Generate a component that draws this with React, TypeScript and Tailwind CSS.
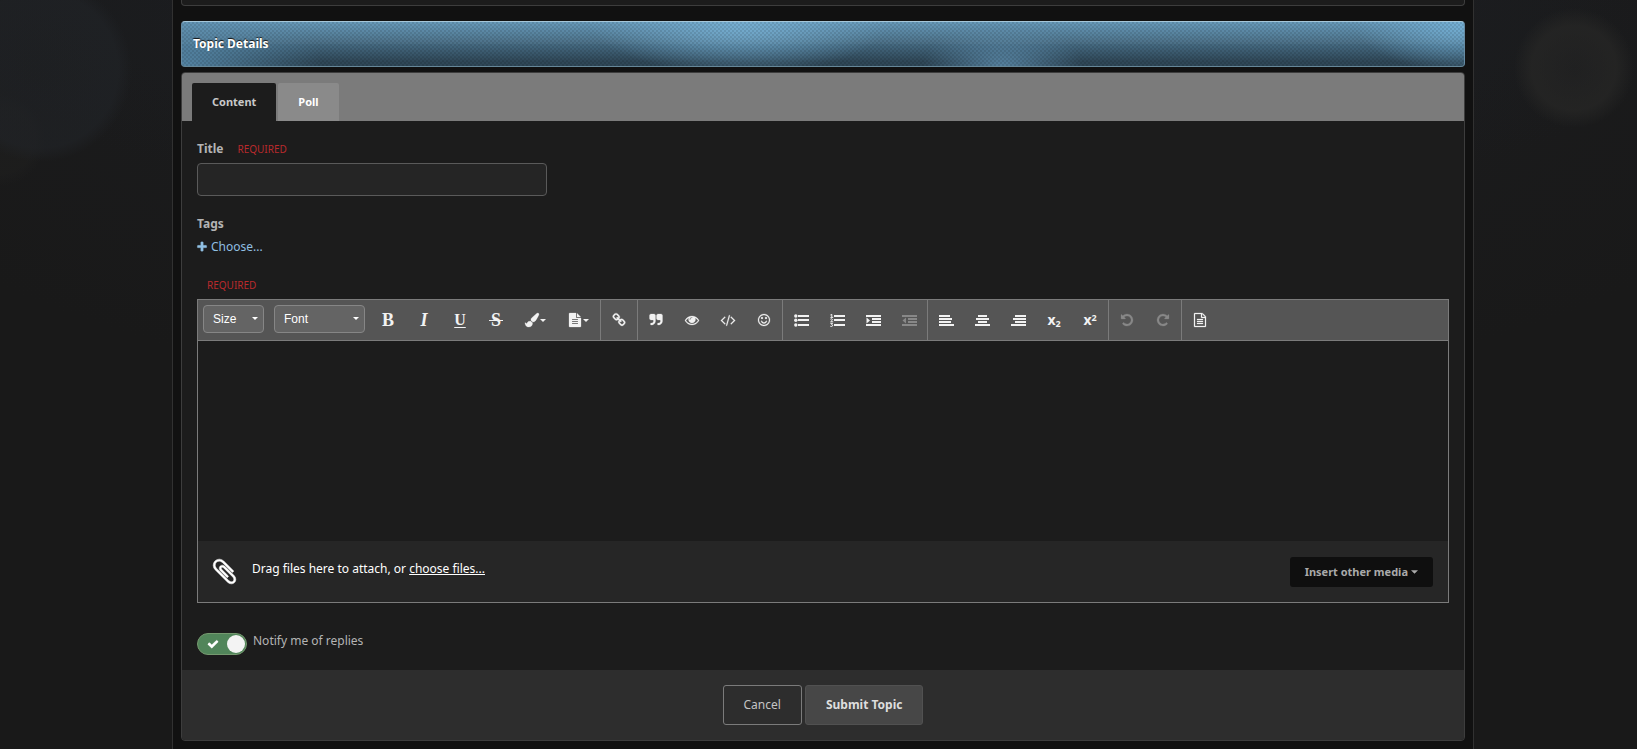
import React, { ReactNode, useState } from "react";

const paths = {
  link: "M1520 1216q0-40-28-68l-208-208q-28-28-68-28-42 0-72 32 3 3 19 18.5t21.5 21.5 15 19 13 25.5 3.5 27.5q0 40-28 68t-68 28q-15 0-27.5-3.5t-25.5-13-19-15-21.5-21.5-18.5-19q-33 31-33 73 0 40 28 68l206 207q27 27 68 27 40 0 68-26l147-146q28-28 28-67zm-703-705q0-40-28-68l-206-207q-28-28-68-28-39 0-68 27l-147 146q-28 28-28 67 0 40 28 68l208 208q27 27 68 27 42 0 72-31-3-3-19-18.5t-21.5-21.5-15-19-13-25.5-3.5-27.5q0-40 28-68t68-28q15 0 27.5 3.5t25.5 13 19 15 21.5 21.5 18.5 19q33-31 33-73zm895 705q0 120-85 203l-147 146q-83 83-203 83-121 0-204-85l-206-207q-83-83-83-203 0-123 88-209l-88-88q-86 88-208 88-120 0-204-84l-208-208q-84-84-84-204t85-203l147-146q83-83 203-83 121 0 204 85l206 207q83 83 83 203 0 123-88 209l88 88q86-88 208-88 120 0 204 84l208 208q84 84 84 204z",
  plus: "M1600 736v192q0 40-28 68t-68 28h-416v416q0 40-28 68t-68 28h-192q-40 0-68-28t-28-68v-416h-416q-40 0-68-28t-28-68v-192q0-40 28-68t68-28h416v-416q0-40 28-68t68-28h192q40 0 68 28t28 68v416h416q40 0 68 28t28 68z",
  check: "M1671 566q0 40-28 68l-724 724-136 136q-28 28-68 28t-68-28l-136-136-362-362q-28-28-28-68t28-68l136-136q28-28 68-28t68 28l294 295 656-657q28-28 68-28t68 28l136 136q28 28 28 68z",
  eye: "M1664 960q-152-236-381-353 61 104 61 225 0 185-131.5 316.5t-316.5 131.5-316.5-131.5-131.5-316.5q0-121 61-225-229 117-381 353 133 205 333.5 326.5t434.5 121.5 434.5-121.5 333.5-326.5zm-720-384q0-20-14-34t-34-14q-125 0-214.5 89.5t-89.5 214.5q0 20 14 34t34 14 34-14 14-34q0-86 61-147t147-61q20 0 34-14t14-34zm848 384q0 34-20 69-140 230-376.5 368.5t-499.5 138.5-499.5-139-376.5-368q-20-35-20-69t20-69q140-229 376.5-368t499.5-139 499.5 139 376.5 368q20 35 20 69z",
  code: "M553 1399l-50 50q-10 10-23 10t-23-10l-466-466q-10-10-10-23t10-23l466-466q10-10 23-10t23 10l50 50q10 10 10 23t-10 23l-393 393 393 393q10 10 10 23t-10 23zm591-1067l-373 1291q-4 13-15.5 19.5t-23.5 2.5l-62-17q-13-4-19.5-15.5t-2.5-24.5l373-1291q4-13 15.5-19.5t23.5-2.5l62 17q13 4 19.5 15.5t2.5 24.5zm657 651l-466 466q-10 10-23 10t-23-10l-50-50q-10-10-10-23t10-23l393-393-393-393q-10-10-10-23t10-23l50-50q10-10 23-10t23 10l466 466q10 10 10 23t-10 23z",
  smile: "M1262 1075q-37 121-138 195t-228 74-228-74-138-195q-8-25 4-48.5t38-31.5q25-8 48.5 4t31.5 38q25 80 92.5 129.5t151.5 49.5 151.5-49.5 92.5-129.5q8-26 32-38t49-4 37 31.5 4 48.5zm-494-435q0 53-37.5 90.5t-90.5 37.5-90.5-37.5-37.5-90.5 37.5-90.5 90.5-37.5 90.5 37.5 37.5 90.5zm512 0q0 53-37.5 90.5t-90.5 37.5-90.5-37.5-37.5-90.5 37.5-90.5 90.5-37.5 90.5 37.5 37.5 90.5zm256 256q0-130-51-248.5t-136.5-204-204-136.5-248.5-51-248.5 51-204 136.5-136.5 204-51 248.5 51 248.5 136.5 204 204 136.5 248.5 51 248.5-51 204-136.5 136.5-204 51-248.5zm128 0q0 209-103 385.5t-279.5 279.5-385.5 103-385.5-103-279.5-279.5-103-385.5 103-385.5 279.5-279.5 385.5-103 385.5 103 279.5 279.5 103 385.5z",
  quote: "M832 320v704q0 104-40.5 198.5t-109.5 163.5-163.5 109.5-198.5 40.5h-64q-26 0-45-19t-19-45v-128q0-26 19-45t45-19h64q106 0 181-75t75-181v-32q0-40-28-68t-68-28h-224q-80 0-136-56t-56-136v-384q0-80 56-136t136-56h384q80 0 136 56t56 136zm896 0v704q0 104-40.5 198.5t-109.5 163.5-163.5 109.5-198.5 40.5h-64q-26 0-45-19t-19-45v-128q0-26 19-45t45-19h64q106 0 181-75t75-181v-32q0-40-28-68t-68-28h-224q-80 0-136-56t-56-136v-384q0-80 56-136t136-56h384q80 0 136 56t56 136z",
  undo: "M1664 896q0 156-61 298t-164 245-245 164-298 61q-172 0-327-72.5t-264-204.5q-7-10-6.5-22.5t8.5-20.5l137-138q10-9 25-9 16 2 23 12 73 95 179 147t225 52q104 0 198.5-40.5t163.5-109.5 109.5-163.5 40.5-198.5-40.5-198.5-109.5-163.5-163.5-109.5-198.5-40.5q-98 0-188 35.5t-160 101.5l137 138q31 30 14 69-17 40-59 40h-448q-26 0-45-19t-19-45v-448q0-42 40-59 39-17 69 14l130 129q107-101 244.5-156.5t284.5-55.5q156 0 298 61t245 164 164 245 61 298z",
  clip: "M1596 1385q0 117-79 196t-196 79q-135 0-235-100l-777-776q-113-115-113-271 0-159 110-270t269-111q158 0 273 113l605 606q10 10 10 22 0 16-30.5 46.5t-46.5 30.5q-13 0-23-10l-606-607q-79-77-181-77-106 0-179 75t-73 181q0 105 76 181l776 777q63 63 145 63 64 0 106-42t42-106q0-82-63-145l-581-581q-26-24-60-24-29 0-48 19t-19 48q0 32 25 59l410 410q10 10 10 22 0 16-31 47t-47 31q-12 0-22-10l-410-410q-63-61-63-149 0-82 57-139t139-57q88 0 149 63l581 581q100 98 100 235z",
  page: "M1596 380q28 28 48 76t20 88v1152q0 40-28 68t-68 28h-1344q-40 0-68-28t-28-68v-1600q0-40 28-68t68-28h896q40 0 88 20t76 48zm-444-244v376h376q-10-29-22-41l-313-313q-12-12-41-22zm384 1528v-1024h-416q-40 0-68-28t-28-68v-416h-768v1536h1280zm-1024-864q0-14 9-23t23-9h704q14 0 23 9t9 23v64q0 14-9 23t-23 9h-704q-14 0-23-9t-9-23v-64zm736 224q14 0 23 9t9 23v64q0 14-9 23t-23 9h-704q-14 0-23-9t-9-23v-64q0-14 9-23t23-9h704zm0 256q14 0 23 9t9 23v64q0 14-9 23t-23 9h-704q-14 0-23-9t-9-23v-64q0-14 9-23t23-9h704z",
  pageSolid: "M1596 476q14 14 28 36h-472v-472q22 14 36 28zm-476 164h544v1056q0 40-28 68t-68 28h-1344q-40 0-68-28t-28-68v-1600q0-40 28-68t68-28h800v544q0 40 28 68t68 28zm160 736v-64q0-14-9-23t-23-9h-704q-14 0-23 9t-9 23v64q0 14 9 23t23 9h704q14 0 23-9t9-23zm0-256v-64q0-14-9-23t-23-9h-704q-14 0-23 9t-9 23v64q0 14 9 23t23 9h704q14 0 23-9t9-23zm0-256v-64q0-14-9-23t-23-9h-704q-14 0-23 9t-9 23v64q0 14 9 23t23 9h704q14 0 23-9t9-23z",
  brush: "M1615 0q70 0 122.5 46.5t52.5 116.5q0 63-45 151-332 629-465 752-97 91-218 91-126 0-216.5-92.5t-90.5-219.5q0-128 92-212l638-579q59-54 130-54zm-909 1034q39 76 106.5 130t150.5 76l1 71q4 213-129.5 347t-348.5 134q-123 0-218-46.5t-152.5-127.5-86.5-183-29-220q7 5 41 30t62 44.5 59 36.5 46 17q41 0 55-37 25-66 57.5-112.5t69.5-76 88-47.5 103-25.5 125-10.5z",
};

function Glyph({ name, className = "size-[14px]" }: { name: keyof typeof paths; className?: string }) {
  return (
    <svg viewBox="0 0 1792 1792" className={`overflow-visible ${className}`} fill="currentColor" stroke="currentColor" strokeWidth="30" aria-hidden="true">
      <path d={paths[name]} />
    </svg>
  );
}

/* Icons made of horizontal bars, on a 15 by 13 grid. */
function Bars({ d, children }: { d: string; children?: ReactNode }) {
  return (
    <svg viewBox="0 0 15 13" className="h-[13px] w-[15px]" fill="currentColor" aria-hidden="true">
      <path d={d} />
      {children}
    </svg>
  );
}

function Caret({ className = "h-1 w-[7px]" }: { className?: string }) {
  return (
    <svg viewBox="0 0 8 4" className={className} fill="currentColor" aria-hidden="true">
      <path d="M0 0h8L4 4z" />
    </svg>
  );
}

function Tool({ label, children, disabled, wide }: { label: string; children: ReactNode; disabled?: boolean; wide?: boolean }) {
  return (
    <button
      type="button"
      aria-label={label}
      title={label}
      disabled={disabled}
      className={`flex h-10 items-center justify-center text-[#f2f2f2] disabled:text-[#888] ${wide ? "w-[43px] gap-px" : "w-9"}`}
    >
      {children}
    </button>
  );
}

function Group({ children }: { children: ReactNode }) {
  return <div className="flex border-r border-[#7b7b7b]">{children}</div>;
}

function Picker({ label, className }: { label: string; className: string }) {
  return (
    <div className={`relative h-7 ${className}`}>
      <select
        aria-label={label}
        className="block size-full appearance-none rounded-sm border border-[#868686] bg-[#646464] pl-[9px] font-['Liberation_Sans',sans-serif] text-xs text-white"
      >
        <option>{label}</option>
      </select>
      <span className="pointer-events-none absolute top-3 right-[6px] flex text-white">
        <Caret className="h-[3px] w-[6px]" />
      </span>
    </div>
  );
}

function Required() {
  return <span className="text-[10px] leading-4 text-[#b92a2c] uppercase">Required</span>;
}

function Toolbar() {
  return (
    <div role="toolbar" aria-label="Formatting" className="flex flex-wrap border-b border-[#7b7b7b] bg-[#555]">
      <div className="flex items-center gap-[10px] pr-[5px] pb-[2px] pl-[5px]">
        <Picker label="Size" className="w-[61px]" />
        <Picker label="Font" className="w-[91px]" />
      </div>
      <Group>
        <Tool label="Bold"><b className="font-['Liberation_Serif',serif] text-lg">B</b></Tool>
        <Tool label="Italic"><b className="font-['Liberation_Serif',serif] text-lg italic">I</b></Tool>
        <Tool label="Underline"><b className="font-['Liberation_Serif',serif] text-base underline decoration-1 underline-offset-2">U</b></Tool>
        <Tool label="Strike Through">
          <span className="relative font-['Liberation_Serif',serif] text-lg leading-6 font-bold">
            S
            <span className="absolute top-3 -right-[2px] -left-[2px] h-px bg-current" />
          </span>
        </Tool>
        <Tool label="Text Color" wide><Glyph name="brush" /><Caret className="h-[3px] w-[6px]" /></Tool>
        <Tool label="Background Color" wide><Glyph name="pageSolid" /><Caret className="h-[3px] w-[6px]" /></Tool>
      </Group>
      <Group>
        <Tool label="Link"><Glyph name="link" /></Tool>
      </Group>
      <Group>
        <Tool label="Quote"><Glyph name="quote" /></Tool>
        <Tool label="Spoiler"><Glyph name="eye" /></Tool>
        <Tool label="Code"><Glyph name="code" /></Tool>
        <Tool label="Emoticons"><Glyph name="smile" /></Tool>
      </Group>
      <Group>
        <Tool label="Bulleted List">
          <Bars d="M4 1h11v2H4zM4 5h11v2H4zM4 10h11v2H4z">
            <circle cx="1.8" cy="2" r="1.7" /><circle cx="1.8" cy="6.3" r="1.7" /><circle cx="1.8" cy="11" r="1.7" />
          </Bars>
        </Tool>
        <Tool label="Numbered List">
          <Bars d="M4 1h11v2H4zM4 5h11v2H4zM4 10h11v2H4z">
            <path d="M.4 1 1.8.3V3.2M.4 3.4h2.8M.4 5.2q2-1 2.2.3 0 .7-2 2.3h2.6M.4 9.4h2.2L1.6 10.7q1.3.1 1.1 1.1-.6 1.1-2.4.5" fill="none" stroke="currentColor" />
          </Bars>
        </Tool>
        <Tool label="Increase Indent">
          <Bars d="M0 1h15v2H0zM6 4h9v2H6zM6 7h9v2H6zM0 10h15v2H0zM.5 3.6v5.8L4 6.5z" />
        </Tool>
        <Tool label="Decrease Indent" disabled>
          <Bars d="M0 1h15v2H0zM6 4h9v2H6zM6 7h9v2H6zM0 10h15v2H0zM4 3.6v5.8L.5 6.5z" />
        </Tool>
      </Group>
      <Group>
        <Tool label="Align Left"><Bars d="M0 1h11v2H0zM0 4h13v2H0zM0 7h12v2H0zM0 10h15v2H0z" /></Tool>
        <Tool label="Center"><Bars d="M3 1h9v2H3zM1 4h13v2H1zM3 7h9v2H3zM0 10h15v2H0z" /></Tool>
        <Tool label="Align Right"><Bars d="M4 1h11v2H4zM2 4h13v2H2zM4 7h11v2H4zM0 10h15v2H0z" /></Tool>
        <Tool label="Subscript"><b className="text-sm">x<sub className="text-[9px]">2</sub></b></Tool>
        <Tool label="Superscript"><b className="text-sm">x<sup className="text-[9px]">2</sup></b></Tool>
      </Group>
      <Group>
        <Tool label="Undo" disabled><Glyph name="undo" /></Tool>
        <Tool label="Redo" disabled><Glyph name="undo" className="size-[14px] -scale-x-100" /></Tool>
      </Group>
      <Tool label="Preview"><Glyph name="page" /></Tool>
    </div>
  );
}

export default function App() {
  const [notify, setNotify] = useState(true);
  return (
    <div className="min-h-screen bg-[#191919] bg-[radial-gradient(circle_at_40px_70px,rgba(33,36,40,0.5)_0,rgba(33,36,40,0.6)_78px,transparent_92px),radial-gradient(circle_at_1574px_68px,rgba(38,38,38,0.5)_0,rgba(38,38,37,0.8)_42px,transparent_60px),radial-gradient(circle_at_0px_140px,rgba(33,33,32,0.4)_34px,transparent_46px),radial-gradient(ellipse_900px_240px_at_50%_0,#1c1f25,transparent),radial-gradient(ellipse_1100px_430px_at_50%_0,#1d1e21,transparent)] pr-[163px] pl-[172px] font-['Noto_Sans',sans-serif] text-xs leading-5 text-[#b4b4b4]">
      <main className="min-h-screen border-x border-[#313131] bg-[#111] px-2 pb-2">
        <div className="h-[6px] rounded-b-sm border border-t-0 border-[#3d3d3d] bg-[#1c1c1c]" />

        <h2 className="mt-[15px] flex h-[46px] items-center rounded-sm border border-t-[#a5c6d8] border-r-[#668ba3] border-b-[#668798] border-l-[#668ba3] bg-[#36536a] bg-[image:repeating-conic-gradient(rgba(0,0,0,0.10)_0_25%,transparent_0_50%),linear-gradient(rgba(255,255,255,0.03)_50%,transparent_50%),radial-gradient(ellipse_150px_52px_at_43.5%_0,#72acd0,transparent),radial-gradient(ellipse_80px_46px_at_64%_100%,rgba(92,139,171,0.85),transparent),radial-gradient(ellipse_140px_80px_at_0_100%,rgba(88,139,172,0.9),transparent),radial-gradient(ellipse_110px_50px_at_100%_0,#70add3,transparent),linear-gradient(#6297b8,#2f4757_90%)] bg-size-[4px_4px,auto,auto,auto,auto,auto,auto] px-[11px] text-xs font-bold text-white [text-shadow:0_-1px_1px_#111]">
          Topic Details
        </h2>

        <form className="mt-[5px] overflow-hidden rounded-sm border border-[#3d3d3d] bg-[#1c1c1c]" onSubmit={(e) => e.preventDefault()}>
          <div role="tablist" className="flex gap-[2px] bg-[#7b7b7b] px-[10px] pt-[10px] text-[11px] font-bold">
            <button type="button" role="tab" aria-selected="true" className="h-[38px] rounded-t-xs bg-[#1c1c1c] px-5 text-[#c9c9c9]">Content</button>
            <button type="button" role="tab" aria-selected="false" className="h-[38px] rounded-t-xs bg-[#8a8a8a] px-5 text-white">Poll</button>
          </div>

          <div className="px-[15px] pt-[18px] pb-[15px]">
            <div className="flex items-center gap-[14px]">
              <label htmlFor="title" className="font-bold">Title</label>
              <Required />
            </div>
            <input id="title" type="text" className="mt-1 block h-[33px] w-full max-w-[350px] rounded-sm border border-[#5a5a5a] bg-[#252525] px-2 text-white" />

            <div className="mt-[18px] font-bold">Tags</div>
            <a href="#tags" className="mt-[3px] flex items-center gap-[3px] text-[#90bfe2]">
              <Glyph name="plus" className="-ml-px size-3" />
              Choose...
            </a>

            <div className="mt-[18px] pl-[10px]"><Required /></div>

            <div className="mt-1 border border-[#7b7b7b]">
              <Toolbar />
              <textarea aria-label="Topic content" className="block h-[200px] w-full resize-none bg-[#1c1c1c] p-3 outline-none" />
              <div className="flex h-[61px] items-center bg-[#262626] pr-[15px] pl-3 text-white">
                <Glyph name="clip" className="size-[29px]" />
                <p className="mb-[6px] ml-[13px]">
                  Drag files here to attach, or <a href="#files" className="underline">choose files...</a>
                </p>
                <button type="button" className="ml-auto flex h-[30px] items-center gap-[3px] rounded-[3px] bg-[#0f0f0f] px-[15px] text-[11px] font-bold text-[#aaa]">
                  Insert other media
                  <Caret />
                </button>
              </div>
            </div>

            <label className="mt-[30px] flex h-[22px] gap-[6px] leading-4">
              <span className="relative block h-[22px] w-[50px]">
                <input
                  type="checkbox"
                  checked={notify}
                  onChange={() => setNotify(!notify)}
                  className="block size-full appearance-none rounded-full border border-[#75996f] bg-[#5a5a5a] checked:bg-[#51855a]"
                />
                <span className="pointer-events-none absolute inset-y-0 left-[10px] flex items-center text-white"><Glyph name="check" className="size-3" /></span>
                <span className="pointer-events-none absolute top-[2px] right-[2px] size-[18px] rounded-full bg-[#f3f3f3]" />
              </span>
              Notify me of replies
            </label>
          </div>

          <div className="flex justify-center gap-[3px] bg-[#2d2d2d] px-4 py-[15px]">
            <button type="button" className="h-10 rounded-[3px] border border-[#7b7b7b] px-5 text-[#c4c4c4]">Cancel</button>
            <button type="submit" className="h-10 rounded-[3px] border border-[#515151] bg-[#474747] px-5 font-bold text-[#dedede]">Submit Topic</button>
          </div>
        </form>
      </main>
    </div>
  );
}
